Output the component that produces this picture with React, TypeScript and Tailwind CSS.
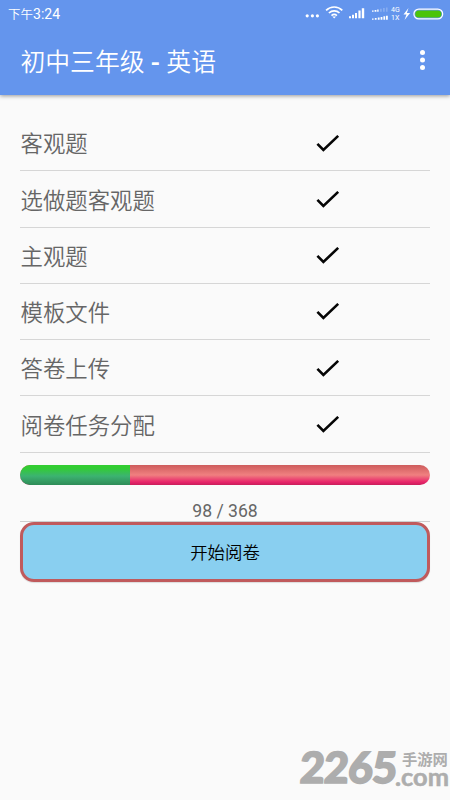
import React from 'react';

const items = ['客观题', '选做题客观题', '主观题', '模板文件', '答卷上传', '阅卷任务分配'];

const StatusIcons: React.FC = () => (
  <svg width="142" height="18" viewBox="0 0 142 18" fill="#fff">
    <circle cx="3.2" cy="11.8" r="1.6" />
    <circle cx="8.4" cy="11.8" r="1.6" />
    <circle cx="13.4" cy="11.8" r="1.6" />
    {/* wifi */}
    <g fill="none" stroke="#fff" strokeWidth="1.7">
      <path d="M22.1 6.3C26.6 1.9 33.8 1.9 38.3 6.3" />
      <path d="M24.9 9c3-2.8 7.6-2.8 10.6 0" />
      <path d="M27.5 11.6c1.6-1.4 3.8-1.4 5.4 0" />
    </g>
    <path d="M28.4 12.6h3.6L30.2 14.6z" />
    {/* main signal */}
    <path d="M45 12.2h2V14.2h-2zM48 10.8h2V14.2h-2zM51 9h2V14.2h-2zM54.4 6.6h2.2V14.2h-2.2zM57.8 4.2h2.4v10h-2.4z" />
    {/* second sim */}
    <path d="M68 6.4h1.6v1.3H68zM70.6 6h1.8v1.7h-1.8zM73.2 5.5h1.4v2.2h-1.4z" />
    <path d="M76 4.8h1.8v2.9H76zM79 4.1h1.8v3.6H79zM82 3.4h1.6v4.3H82z" opacity=".22" />
    <path d="M68 14.5h1.6v1.3H68zM70.8 14h1.8v1.8h-1.8zM73.8 13.5h1.8v2.3h-1.8zM76.6 12.9h1.8v2.9h-1.8zM79.4 12.3h1.8v3.5h-1.8zM82 11.7h1.8v4.1H82z" />
    <text x="87" y="8.2" fontSize="7" fontFamily="Roboto, sans-serif">4G</text>
    <text x="87" y="16.2" fontSize="7" fontFamily="Roboto, sans-serif">1X</text>
    <path d="M104.5 4l-5 6.4h3l-2 5.5 5.6-6.8h-3.2z" />
    <rect x="109.9" y="5.1" width="28.8" height="9.8" rx="4.9" fill="none" stroke="#fff" strokeWidth="1.2" />
    <rect x="111.2" y="6.4" width="26.2" height="7.2" rx="3.6" fill="#4bc40a" />
  </svg>
);

const Check: React.FC = () => (
  <svg width="24" height="18" viewBox="0 0 24 18" fill="none" stroke="#050505" strokeWidth="2.6">
    <path d="M1.4 8.8L7.4 14.9L22.2 0.9" />
  </svg>
);

const App: React.FC = () => {
  return (
    <div className="relative h-[800px] w-[450px] overflow-hidden bg-[#fafafa] font-['Roboto','Noto_Sans_CJK_SC',sans-serif]">
      <header className="h-[95px] bg-[#6495ed] text-white shadow-[0_1px_4px_rgba(0,0,0,0.4)]">
        <div className="flex h-[25px] items-center justify-between pl-2 pr-[4px]">
          <span className="pt-[2px] font-['Noto_Sans_CJK_SC'] text-[12.5px] font-[350] leading-none">
            下午<span className="font-['Roboto'] text-[14px] font-normal">3:24</span>
          </span>
          <StatusIcons />
        </div>
        <div className="flex h-[70px] items-center justify-between pl-[20.5px] pr-[25px]">
          <h1 className="pt-[7px] text-[24.8px] font-[350] leading-none">
            初中三年级 <span className="font-bold">-</span> 英语
          </h1>
          <svg width="5" height="22" viewBox="0 0 5 22" fill="#fff">
            <circle cx="2.5" cy="3.5" r="2.5" />
            <circle cx="2.5" cy="11" r="2.5" />
            <circle cx="2.5" cy="18.5" r="2.5" />
          </svg>
        </div>
      </header>

      <main className="px-5 pt-[20px]">
        <ul>
          {items.map((item) => (
            <li key={item} className="flex h-[56.25px] items-center justify-between border-b border-[#d6d6d6] pl-[0.5px] pr-[90px] pt-[2px]">
              <span className="pt-[2px] text-[22.4px] font-[350] leading-none text-[#666]">{item}</span>
              <Check />
            </li>
          ))}
        </ul>

        <div className="mt-[12.5px] flex h-5 overflow-hidden rounded-full bg-[linear-gradient(#cd5c5c,#f08080_50%,#e8246a_85%,#c81e5a)]">
          <div className="w-[110px] bg-[linear-gradient(#32cd32_15%,#3cb371_55%,#2e8b57)]" />
        </div>

        <div className="mt-[12px] flex h-[25px] items-center justify-center border-b border-[#cfcfcf] pt-[4px] text-[17.6px] text-[#666]">
          98 / 368
        </div>

        <button className="flex h-[60px] w-full items-center justify-center rounded-[14px] border-[3px] border-[#c05a5c] bg-[#89cff0] pt-[2px] text-[17.4px] font-[350] text-black shadow-[0_1px_1px_rgba(0,0,0,0.12)]">
          开始阅卷
        </button>
      </main>

      {/* site watermark */}
      <div className="absolute left-[300px] top-[745px] flex h-[44px] w-[150px] text-[#adadad]">
        <span className="w-[95px] -skew-x-3 font-['Lato'] text-[43px] font-black leading-[43px] tracking-[-0.8px] [-webkit-text-stroke:1.6px_#adadad]">2265</span>
        <div className="flex flex-col">
          <span className="pl-[7px] pt-[8px] text-[15.3px] font-bold leading-[15px]">手游网</span>
          <span className="origin-left scale-x-[1.06] font-['Lato'] text-[24px] font-bold leading-[17px] [-webkit-text-stroke:0.5px_#adadad]">.com</span>
        </div>
      </div>
    </div>
  );
};

export default App;
